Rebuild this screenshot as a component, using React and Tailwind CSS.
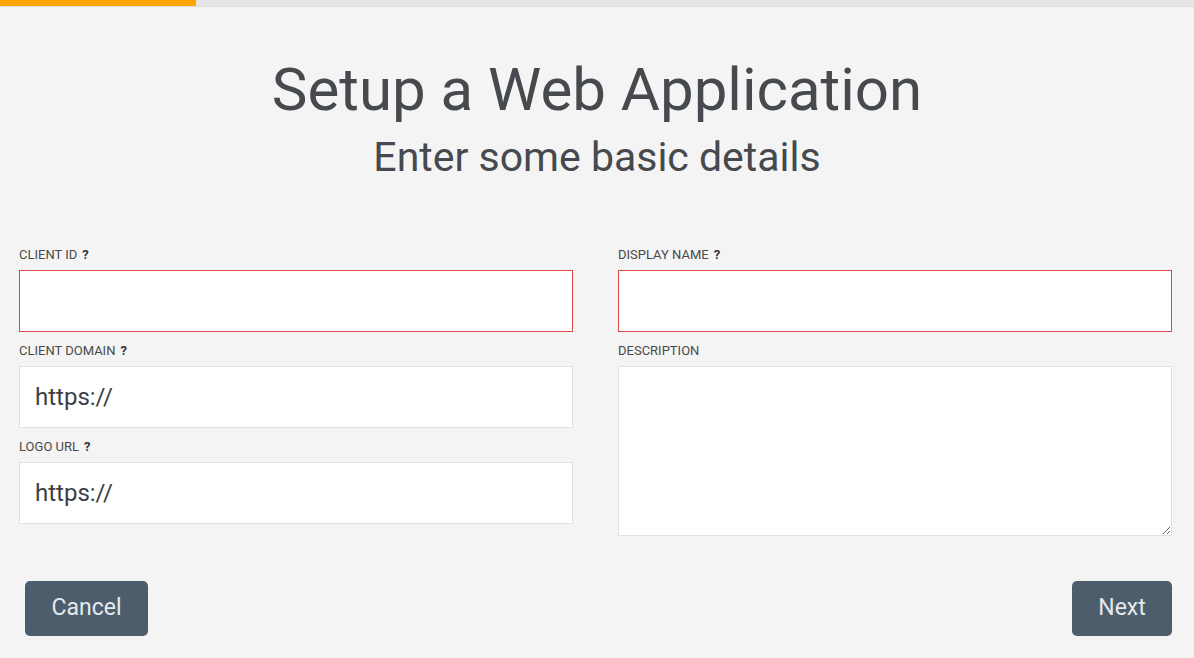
import React from 'react';

function Label({ text, help }) {
  return (
    <label className="block text-[13px] leading-[15px] text-[#4a4a4a] uppercase mb-[8px]">
      {text}
      {help && <b className="ml-[5px] font-bold text-[#333]">?</b>}
    </label>
  );
}

function Field({ label, help, value, error }) {
  return (
    <div className="mb-[11px]">
      <Label text={label} help={help} />
      <input
        defaultValue={value}
        className={`w-full h-[62px] bg-white px-[15px] text-[24px] text-[#3b3f44] outline-none border ${
          error ? 'border-[#dc4a48]' : 'border-[#e2e2e2]'
        }`}
      />
    </div>
  );
}

export default function App() {
  return (
    <div className="min-h-[658px] bg-[#f4f4f4] font-['Roboto',sans-serif]">
      {/* progress */}
      <div className="h-[7px] bg-[#e6e6e6] border-b border-[#dedede] flex">
        <div className="w-[196px] bg-[#ffa500]" />
      </div>

      <header className="text-center text-[#46494d] pt-[47px]">
        <h1 className="text-[60px] leading-[72px] font-normal">Setup a Web Application</h1>
        <h2 className="text-[41px] leading-[48px] mt-[7px] font-normal">Enter some basic details</h2>
      </header>

      <div className="grid grid-cols-2 gap-x-[45px] pl-[19px] pr-[22px] mt-[66px]">
        <div>
          <Field label="Client ID" help error />
          <Field label="Client Domain" help value="https://" />
          <Field label="Logo URL" help value="https://" />
        </div>
        <div>
          <Field label="Display Name" help error />
          <div>
            <Label text="Description" />
            <textarea className="w-full h-[170px] block bg-white border border-[#e2e2e2] px-[15px] py-[10px] text-[24px] outline-none" />
          </div>
        </div>
      </div>

      <div className="flex justify-between pl-[25px] pr-[22px] mt-[45px] pb-[21px]">
        <button className="w-[123px] h-[55px] rounded-[5px] bg-[#4d5d6b] text-[#e4e9ee] text-[23px]">Cancel</button>
        <button className="w-[100px] h-[55px] rounded-[5px] bg-[#4d5d6b] text-[#e4e9ee] text-[23px]">Next</button>
      </div>
    </div>
  );
}
